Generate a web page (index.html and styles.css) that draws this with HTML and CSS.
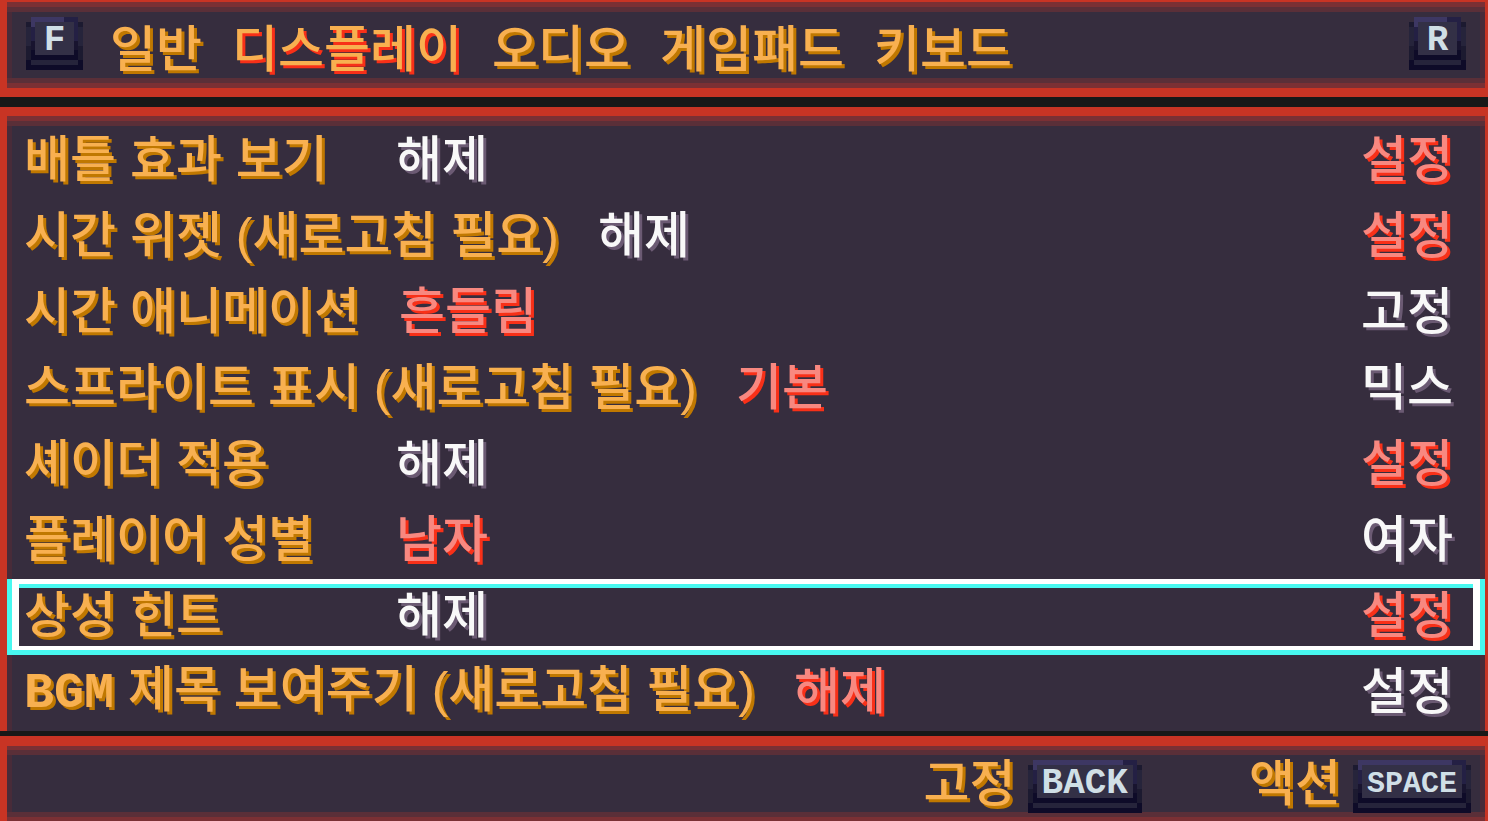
FILE: index.html
```html
<!DOCTYPE html>
<html lang="ko">
<head>
  <meta charset="UTF-8">
  <meta name="viewport" content="width=device-width, initial-scale=1.0">
  <title>디스플레이</title>
  <link rel="stylesheet" href="styles.css">
</head>
<body>
  <header class="panel header">
    <button class="key" type="button">F</button>
    <nav class="tabs">
      <a class="tab" href="#general">일반</a>
      <a class="tab tab-active" href="#display">디스플레이</a>
      <a class="tab" href="#audio">오디오</a>
      <a class="tab" href="#gamepad">게임패드</a>
      <a class="tab" href="#keyboard">키보드</a>
    </nav>
    <button class="key" type="button">R</button>
  </header>

  <main class="panel settings">
    <div class="row" role="radiogroup" aria-labelledby="effects">
      <span class="row-name" id="effects">배틀 효과 보기</span>
      <label class="option"><input type="radio" name="effects"><span>해제</span></label>
      <label class="option"><input type="radio" name="effects" checked><span>설정</span></label>
    </div>
    <div class="row" role="radiogroup" aria-labelledby="widget">
      <span class="row-name" id="widget">시간 위젯 (새로고침 필요)</span>
      <label class="option"><input type="radio" name="widget"><span>해제</span></label>
      <label class="option"><input type="radio" name="widget" checked><span>설정</span></label>
    </div>
    <div class="row" role="radiogroup" aria-labelledby="animation">
      <span class="row-name" id="animation">시간 애니메이션</span>
      <label class="option"><input type="radio" name="animation" checked><span>흔들림</span></label>
      <label class="option"><input type="radio" name="animation"><span>고정</span></label>
    </div>
    <div class="row" role="radiogroup" aria-labelledby="sprites">
      <span class="row-name" id="sprites">스프라이트 표시 (새로고침 필요)</span>
      <label class="option"><input type="radio" name="sprites" checked><span>기본</span></label>
      <label class="option"><input type="radio" name="sprites"><span>믹스</span></label>
    </div>
    <div class="row" role="radiogroup" aria-labelledby="shader">
      <span class="row-name" id="shader">셰이더 적용</span>
      <label class="option"><input type="radio" name="shader"><span>해제</span></label>
      <label class="option"><input type="radio" name="shader" checked><span>설정</span></label>
    </div>
    <div class="row" role="radiogroup" aria-labelledby="gender">
      <span class="row-name" id="gender">플레이어 성별</span>
      <label class="option"><input type="radio" name="gender" checked><span>남자</span></label>
      <label class="option"><input type="radio" name="gender"><span>여자</span></label>
    </div>
    <div class="row row-selected" role="radiogroup" aria-labelledby="hints">
      <span class="row-name" id="hints">상성 힌트</span>
      <label class="option"><input type="radio" name="hints"><span>해제</span></label>
      <label class="option"><input type="radio" name="hints" checked><span>설정</span></label>
    </div>
    <div class="row" role="radiogroup" aria-labelledby="bgm">
      <span class="row-name" id="bgm"><span class="latin">BGM</span> 제목 보여주기 (새로고침 필요)</span>
      <label class="option"><input type="radio" name="bgm" checked><span>해제</span></label>
      <label class="option"><input type="radio" name="bgm"><span>설정</span></label>
    </div>
  </main>

  <footer class="panel footer">
    <div class="hint">
      <span>고정</span>
      <button class="key key-wide" type="button">BACK</button>
    </div>
    <div class="hint">
      <span>액션</span>
      <button class="key key-wide key-long" type="button">SPACE</button>
    </div>
  </footer>
</body>
</html>
```
FILE: styles.css
```css
* {
  box-sizing: border-box;
}

body {
  display: flex;
  flex-direction: column;
  min-height: 100vh;
  margin: 0;

  font-weight: 500;
  font-size: 50px;
  line-height: 60px;
  font-family: "Liberation Sans", "Noto Sans CJK KR", sans-serif;
  white-space: nowrap;

  color: #f8b050;
  text-shadow: 3px 3px 0 #c07800;
  background-color: #181818;
}

.panel {
  border: 0 solid #c83424;
  border-left-width: 7px;
  border-right-width: 3px;
  background-color: #362d3e;
}

/* header */

.header {
  display: flex;
  align-items: flex-start;
  margin-bottom: 10px;
  padding: 15px 19px 8px;

  border-top-width: 2px;
  border-bottom-width: 9px;
  box-shadow:
    inset 0 5px 0 #7a3034,
    inset 0 -5px 0 #7a3034,
    inset 0 10px 0 #5a2f38,
    inset 0 -10px 0 #5a2f38,
    inset 5px 0 0 #482b39,
    inset -5px 0 0 #482b39;
}

.tabs {
  display: flex;
  flex-grow: 1;
  gap: 30px;
  padding-top: 3px;
  padding-left: 27px;
}

.tab {
  color: inherit;
  text-decoration: none;
}

.tab-active {
  text-shadow: 3px 3px 0 #f83018;
}

/* keyboard keys */

.key {
  width: 57px;
  height: 53px;
  padding: 0 0 6px;

  border: none;
  font-weight: 700;
  font-size: 36px;
  line-height: 40px;
  font-family: "Liberation Mono", monospace;

  color: #d0dfe6;
  text-shadow: none;
  background-color: transparent;
  background-image:
    linear-gradient(#333046, #333046),
    linear-gradient(#26243b, #26243b),
    linear-gradient(#3d3763, #3d3763),
    linear-gradient(#3d3763, #3d3763),
    linear-gradient(#242044 24px, #18142f 24px, #18142f 33px, #0e0b28 33px),
    linear-gradient(#1c1a30 5px, #26243b 5px, #26243b 24px, #1c1a30 24px, #1c1a30 38px, #0e0b28 38px);
  background-position:
    9px 5px,
    5px 43px,
    5px 0,
    5px 5px,
    5px 0,
    0 5px;
  background-size:
    calc(100% - 18px) 33px,
    calc(100% - 10px) 5px,
    calc(100% - 24px) 5px,
    4px 5px,
    calc(100% - 10px) 100%,
    100% calc(100% - 5px);
  background-repeat: no-repeat;
  cursor: pointer;
}

.key-wide {
  width: auto;
  padding: 0 14px 6px;
}

.key-long {
  font-size: 30px;
}

/* settings */

.settings {
  flex-grow: 1;
  padding-top: 7px;

  border-top-width: 9px;
  box-shadow:
    inset 0 5px 0 #7a3034,
    inset 0 10px 0 #5a2f38,
    inset 5px 0 0 #482b39,
    inset -5px 0 0 #482b39;
}

.row {
  display: flex;
  align-items: center;
  height: 76px;
  padding: 0 32px 2px 17px;
}

.row-selected {
  box-shadow:
    inset 5px 0 0 #48f8f0,
    inset -5px 0 0 #48f8f0,
    inset 0 5px 0 #ffffff,
    inset 0 -5px 0 #48f8f0,
    inset 12px 0 0 #ffffff,
    inset -12px 0 0 #ffffff,
    inset 0 9px 0 #48f8f0,
    inset 0 -9px 0 #ffffff;
}

.row-name {
  min-width: 333px;
  margin-right: 39px;
}

.latin {
  font-weight: 700;
  font-family: "Liberation Mono", monospace;
}

.option {
  color: #f8f8f8;
  text-shadow: 3px 3px 0 #6b5a73;
  cursor: pointer;
}

.option:last-child {
  margin-left: auto;
}

.option input {
  position: absolute;
  margin: 0;
  opacity: 0;
}

.option input:checked + span {
  color: #f88880;
  text-shadow: 3px 3px 0 #f83018;
}

/* footer */

.footer {
  display: flex;
  justify-content: flex-end;
  gap: 107px;
  height: 85px;
  margin-top: 5px;
  padding: 8px 14px 0 16px;

  border-top-width: 10px;
  box-shadow:
    inset 0 4px 0 #7a3034,
    inset 0 -4px 0 #7a3034,
    inset 0 9px 0 #5a2f38,
    inset 0 -9px 0 #5a2f38,
    inset 5px 0 0 #482b39,
    inset -5px 0 0 #482b39;
}

.hint {
  display: flex;
  align-items: flex-start;
  gap: 12px;
}

.hint .key {
  margin-top: 6px;
}
```
